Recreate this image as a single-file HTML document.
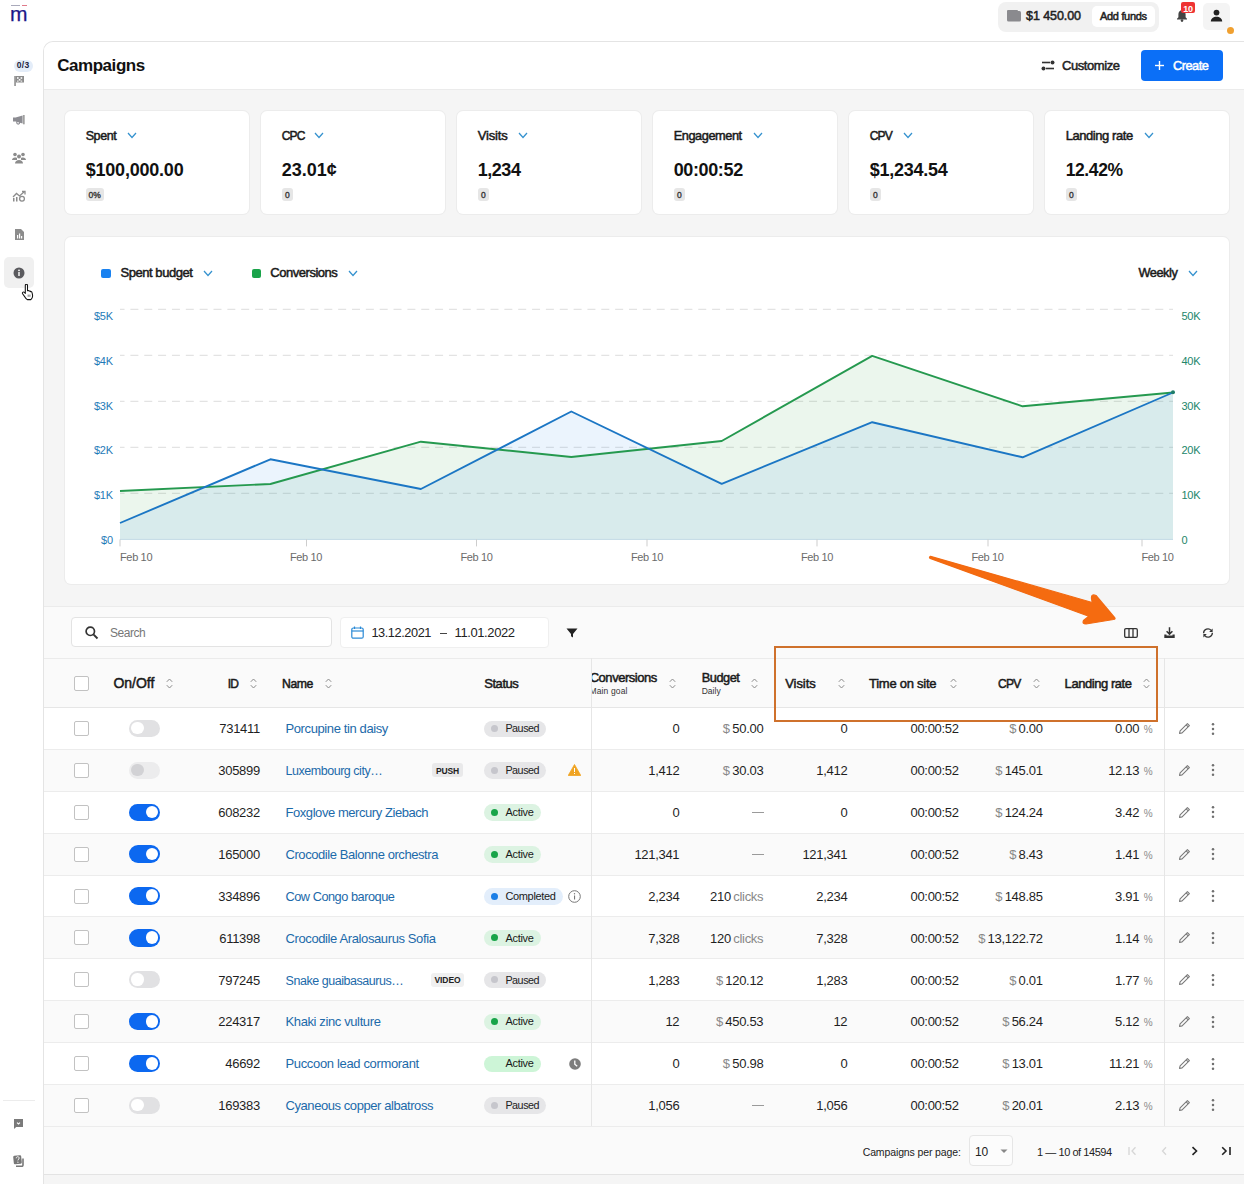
<!DOCTYPE html><html><head><meta charset="utf-8"><style>
html,body{margin:0;padding:0;overflow:hidden;}
body{width:1244px;height:1184px;position:relative;overflow:hidden;background:#fff;font-family:"Liberation Sans",sans-serif;}
.t{position:absolute;white-space:nowrap;line-height:1;}
</style></head><body>
<div style="position:absolute;left:43px;top:41px;width:1201px;height:1143px;background:#f5f5f5;border-left:1px solid #e4e4e4;border-top:1px solid #e4e4e4;border-top-left-radius:10px;box-sizing:border-box;"></div>
<div style="position:absolute;left:44px;top:42px;width:1200px;height:47px;background:#fff;border-top-left-radius:9px;border-bottom:1px solid #ebebeb;"></div>
<div class="t" style="top:57.00px;font-size:17px;color:#111;font-weight:700;letter-spacing:-0.45px;left:57.20px;">Campaigns</div>
<svg style="position:absolute;left:1041px;top:60px;" width="14" height="11" viewBox="0 0 14 11"><g stroke="#333" stroke-width="1.6" fill="#333"><line x1="1" y1="2.5" x2="9" y2="2.5"/><circle cx="11.5" cy="2.5" r="2" stroke="none"/><line x1="5" y1="8.5" x2="13" y2="8.5"/><circle cx="2.5" cy="8.5" r="2" stroke="none"/></g></svg>
<div class="t" style="top:59.00px;font-size:13px;color:#222;-webkit-text-stroke:0.5px #222;letter-spacing:-0.425px;left:1062.00px;">Customize</div>
<div style="position:absolute;left:1141px;top:50px;width:82px;height:31px;background:#0b6ff7;border-radius:4px;"></div>
<svg style="position:absolute;left:1155px;top:60px;" width="9" height="11" viewBox="0 0 9 11"><g stroke="#fff" stroke-width="1.4"><line x1="4.5" y1="1" x2="4.5" y2="10"/><line x1="0" y1="5.5" x2="9" y2="5.5"/></g></svg>
<div class="t" style="top:60.00px;font-size:12.75px;color:#fff;-webkit-text-stroke:0.5px #fff;letter-spacing:-0.48px;left:1173.00px;">Create</div>
<div class="t" style="top:3.00px;font-size:21px;color:#1c168a;left:10.00px;-webkit-text-stroke:0.25px #1b1f8a;">m</div>
<div style="position:absolute;left:11px;top:5px;width:9px;height:1px;background:#aab;"></div>
<div style="position:absolute;left:22px;top:5px;width:5px;height:1px;background:#e07a8a;"></div>
<div style="position:absolute;left:998px;top:2px;width:161px;height:30px;background:#f1f1f1;border-radius:8px;"></div>
<svg style="position:absolute;left:1007px;top:10px;" width="14" height="12" viewBox="0 0 14 12"><rect x="0" y="1" width="14" height="10.5" rx="1.5" fill="#8a8a8e"/><rect x="0" y="0" width="11" height="3" rx="1" fill="#8a8a8e"/></svg>
<div class="t" style="top:10.00px;font-size:12.5px;color:#222;-webkit-text-stroke:0.5px #222;letter-spacing:-0.075px;left:1026.00px;">$1 450.00</div>
<div style="position:absolute;left:1092px;top:6px;width:63px;height:21px;background:#fff;border-radius:5px;"></div>
<div class="t" style="top:11.00px;font-size:11px;color:#222;-webkit-text-stroke:0.5px #222;letter-spacing:-0.312px;left:1100.00px;">Add funds</div>
<svg style="position:absolute;left:1176px;top:9px;" width="12" height="13" viewBox="0 0 12 13"><path d="M6 1.2c-2.3 0-3.6 1.8-3.6 4v3L1 9.8v.7h10v-.7L9.6 8.2v-3c0-2.2-1.3-4-3.6-4z" fill="#444"/><circle cx="6" cy="11.6" r="1.3" fill="#444"/></svg>
<div style="position:absolute;left:1181px;top:2px;width:14px;height:11px;background:#e33;border-radius:2px;"></div>
<div class="t" style="top:5.00px;font-size:9px;color:#fff;font-weight:700;letter-spacing:-0.2px;left:888px;width:600px;text-align:center;">10</div>
<div style="position:absolute;left:1203px;top:3px;width:27px;height:27px;background:#f4f4f4;border-radius:5px;"></div>
<svg style="position:absolute;left:1210px;top:9px;" width="13" height="13" viewBox="0 0 13 13"><circle cx="6.5" cy="3.6" r="2.9" fill="#222"/><path d="M0.8 12.5c0-3 2.6-4.8 5.7-4.8s5.7 1.8 5.7 4.8z" fill="#222"/></svg>
<div style="position:absolute;left:1226.5px;top:26.5px;width:7px;height:7px;background:#f0a030;border-radius:50%;"></div>
<div style="position:absolute;left:14px;top:59.5px;width:18.5px;height:12px;background:#e4edf9;border-radius:6px;"></div>
<div class="t" style="top:61.00px;font-size:8.5px;color:#1c2440;font-weight:700;letter-spacing:0.4px;left:-276.75px;width:600px;text-align:center;">0/3</div>
<svg style="position:absolute;left:14px;top:75px;" width="11" height="11" viewBox="0 0 11 11"><rect x="0.3" y="1" width="1.5" height="10" fill="#888"/><rect x="1.8" y="1" width="8.2" height="6.5" fill="#8c8c8c"/><g fill="#fff"><rect x="3" y="2.2" width="1.6" height="1.6"/><rect x="6.6" y="2.2" width="1.6" height="1.6"/><rect x="4.8" y="4" width="1.6" height="1.6"/><rect x="3" y="5.6" width="1.6" height="1" /><rect x="6.6" y="5.6" width="1.6" height="1"/></g></svg>
<svg style="position:absolute;left:12px;top:114px;" width="13" height="11" viewBox="0 0 13 11"><path d="M1 3.6h2.6L10.6 1.6v7.8L3.6 7.4H1z" fill="#8c8c92"/><rect x="11" y="1" width="1.7" height="9.3" fill="#a0a0a0"/><circle cx="6.2" cy="8.6" r="1.5" fill="none" stroke="#8c8c92" stroke-width="1.1"/></svg>
<svg style="position:absolute;left:12px;top:152px;" width="14" height="12" viewBox="0 0 14 12"><g fill="#8c8c8c"><circle cx="3" cy="2.5" r="1.8"/><circle cx="11" cy="2.5" r="1.8"/><circle cx="7" cy="4.5" r="2"/><path d="M0 8c0-1.5 1.3-2.5 3-2.5s2 .5 2 .5v2z"/><path d="M14 8c0-1.5-1.3-2.5-3-2.5s-2 .5-2 .5v2z"/><path d="M3 11.5c0-2 1.8-3.5 4-3.5s4 1.5 4 3.5z"/></g></svg>
<svg style="position:absolute;left:12px;top:190px;" width="14" height="12" viewBox="0 0 14 12"><g fill="none" stroke="#8c8c8c" stroke-width="1.3"><path d="M1 7l3.5-3.5 3 2.5 5-4.5"/><path d="M10 1.5h3v3"/><circle cx="10" cy="8.8" r="2.4"/></g><rect x="1" y="8" width="1.5" height="3.5" fill="#8c8c8c"/><rect x="4" y="7" width="1.5" height="4.5" fill="#8c8c8c"/></svg>
<svg style="position:absolute;left:15px;top:229px;" width="9" height="11" viewBox="0 0 9 11"><path d="M0 0h6l3 3v8H0z" fill="#8c8c8c"/><rect x="2" y="6" width="1.2" height="3.5" fill="#fff"/><rect x="4" y="4.5" width="1.2" height="5" fill="#fff"/><rect x="6" y="7" width="1.2" height="2.5" fill="#fff"/></svg>
<div style="position:absolute;left:4px;top:257px;width:30px;height:31px;background:#f0f0f0;border-radius:5px;"></div>
<svg style="position:absolute;left:13px;top:267px;" width="12" height="12" viewBox="0 0 12 12"><circle cx="6" cy="6" r="5.5" fill="#5a5a5e"/><rect x="5.3" y="5" width="1.4" height="4" fill="#fff"/><circle cx="6" cy="3.3" r="0.9" fill="#fff"/></svg>
<svg style="position:absolute;left:20.5px;top:284px;" width="15" height="17" viewBox="0 0 15 17"><path d="M4.3 1.4c0-.7.5-1.1 1.1-1.1s1.1.4 1.1 1.1v5.3l.2-.1c.6-.2 1.2 0 1.4.6.6-.3 1.3-.1 1.5.5.6-.2 1.3.1 1.4.7l.5 2.4c.3 1.7-.2 3.6-1.6 4.8H6.3c-.8-.5-1.6-1.3-2.1-2.2L1.6 9.7c-.4-.6-.2-1.3.4-1.6.6-.3 1.2-.1 1.6.4l.7.9z" fill="#fff" stroke="#111" stroke-width="1.05" stroke-linejoin="round"/><path d="M7.2 10.6v2.2M8.9 10.6v2.2" stroke="#555" stroke-width=".8"/></svg>
<div style="position:absolute;left:3px;top:1100px;width:32px;height:1px;background:#ececec;"></div>
<svg style="position:absolute;left:14px;top:1119px;" width="9" height="10" viewBox="0 0 9 10"><path d="M0 0h9v8H2.2L0 10z" fill="#7a7a7a"/><path d="M3 3.6l1.5 1.3 1.5-1.3" stroke="#fff" stroke-width="1.2" fill="none"/></svg>
<svg style="position:absolute;left:13px;top:1155px;" width="11" height="12" viewBox="0 0 11 12"><rect x="0.5" y="0.5" width="8" height="8.5" rx="1.2" fill="#777" transform="rotate(-6 4.5 4.7)"/><path d="M10 3.5v6.5c0 .8-.5 1.3-1.3 1.3H3" stroke="#777" stroke-width="1.6" fill="none"/><path d="M3.2 3.3c0-1 .7-1.6 1.5-1.6s1.5.6 1.5 1.4c0 1-1.3 1.1-1.3 2.3" stroke="#fff" stroke-width="1" fill="none"/><circle cx="4.9" cy="7.2" r="0.6" fill="#fff"/></svg>
<div style="position:absolute;left:65px;top:111px;width:184px;height:103px;background:#fff;border-radius:6px;box-shadow:0 0 0 1px #ececec;"></div>
<div class="t" style="top:130.00px;font-size:12.5px;color:#1a1a1a;-webkit-text-stroke:0.5px #1a1a1a;letter-spacing:-0.425px;left:85.70px;">Spent</div>
<svg style="position:absolute;left:127.2px;top:131.5px;" width="10" height="7" viewBox="0 0 10 7"><path d="M1 1l4.0 4.5l4.0 -4.5" fill="none" stroke="#3592cf" stroke-width="1.25"/></svg>
<div class="t" style="top:161.00px;font-size:18px;color:#111;font-weight:700;letter-spacing:-0.21px;left:85.70px;">$100,000.00</div>
<div style="position:absolute;left:85.5px;top:188px;width:18.5px;height:13px;background:#e6e6e6;border-radius:3px;"></div>
<div class="t" style="top:191.00px;font-size:8.5px;color:#333;-webkit-text-stroke:0.35px #333;left:-205.25px;width:600px;text-align:center;">0%</div>
<div style="position:absolute;left:261px;top:111px;width:184px;height:103px;background:#fff;border-radius:6px;box-shadow:0 0 0 1px #ececec;"></div>
<div class="t" style="top:130.00px;font-size:12px;color:#1a1a1a;-webkit-text-stroke:0.5px #1a1a1a;letter-spacing:-0.8px;left:281.70px;">CPC</div>
<svg style="position:absolute;left:314.2px;top:131.5px;" width="10" height="7" viewBox="0 0 10 7"><path d="M1 1l4.0 4.5l4.0 -4.5" fill="none" stroke="#3592cf" stroke-width="1.25"/></svg>
<div class="t" style="top:161.00px;font-size:18px;color:#111;font-weight:700;letter-spacing:-0.02px;left:281.70px;">23.01¢</div>
<div style="position:absolute;left:281.5px;top:188px;width:11.5px;height:13px;background:#e6e6e6;border-radius:3px;"></div>
<div class="t" style="top:191.00px;font-size:8.5px;color:#333;-webkit-text-stroke:0.35px #333;left:-12.75px;width:600px;text-align:center;">0</div>
<div style="position:absolute;left:457px;top:111px;width:184px;height:103px;background:#fff;border-radius:6px;box-shadow:0 0 0 1px #ececec;"></div>
<div class="t" style="top:129.00px;font-size:13px;color:#1a1a1a;-webkit-text-stroke:0.5px #1a1a1a;letter-spacing:-0.14px;left:477.70px;">Visits</div>
<svg style="position:absolute;left:518.3px;top:131.5px;" width="10" height="7" viewBox="0 0 10 7"><path d="M1 1l4.0 4.5l4.0 -4.5" fill="none" stroke="#3592cf" stroke-width="1.25"/></svg>
<div class="t" style="top:161.00px;font-size:18px;color:#111;font-weight:700;letter-spacing:-0.45px;left:477.70px;">1,234</div>
<div style="position:absolute;left:477.5px;top:188px;width:11.5px;height:13px;background:#e6e6e6;border-radius:3px;"></div>
<div class="t" style="top:191.00px;font-size:8.5px;color:#333;-webkit-text-stroke:0.35px #333;left:183.25px;width:600px;text-align:center;">0</div>
<div style="position:absolute;left:653px;top:111px;width:184px;height:103px;background:#fff;border-radius:6px;box-shadow:0 0 0 1px #ececec;"></div>
<div class="t" style="top:130.00px;font-size:12.75px;color:#1a1a1a;-webkit-text-stroke:0.5px #1a1a1a;letter-spacing:-0.433px;left:673.70px;">Engagement</div>
<svg style="position:absolute;left:752.9000000000001px;top:131.5px;" width="10" height="7" viewBox="0 0 10 7"><path d="M1 1l4.0 4.5l4.0 -4.5" fill="none" stroke="#3592cf" stroke-width="1.25"/></svg>
<div class="t" style="top:161.00px;font-size:18px;color:#111;font-weight:700;letter-spacing:-0.371px;left:673.70px;">00:00:52</div>
<div style="position:absolute;left:673.5px;top:188px;width:11.5px;height:13px;background:#e6e6e6;border-radius:3px;"></div>
<div class="t" style="top:191.00px;font-size:8.5px;color:#333;-webkit-text-stroke:0.35px #333;left:379.25px;width:600px;text-align:center;">0</div>
<div style="position:absolute;left:849px;top:111px;width:184px;height:103px;background:#fff;border-radius:6px;box-shadow:0 0 0 1px #ececec;"></div>
<div class="t" style="top:130.00px;font-size:12px;color:#1a1a1a;-webkit-text-stroke:0.5px #1a1a1a;letter-spacing:-0.8px;left:869.70px;">CPV</div>
<svg style="position:absolute;left:903.2px;top:131.5px;" width="10" height="7" viewBox="0 0 10 7"><path d="M1 1l4.0 4.5l4.0 -4.5" fill="none" stroke="#3592cf" stroke-width="1.25"/></svg>
<div class="t" style="top:161.00px;font-size:18px;color:#111;font-weight:700;letter-spacing:-0.262px;left:869.70px;">$1,234.54</div>
<div style="position:absolute;left:869.5px;top:188px;width:11.5px;height:13px;background:#e6e6e6;border-radius:3px;"></div>
<div class="t" style="top:191.00px;font-size:8.5px;color:#333;-webkit-text-stroke:0.35px #333;left:575.25px;width:600px;text-align:center;">0</div>
<div style="position:absolute;left:1045px;top:111px;width:184px;height:103px;background:#fff;border-radius:6px;box-shadow:0 0 0 1px #ececec;"></div>
<div class="t" style="top:129.00px;font-size:13px;color:#1a1a1a;-webkit-text-stroke:0.5px #1a1a1a;letter-spacing:-0.436px;left:1065.70px;">Landing rate</div>
<svg style="position:absolute;left:1143.7px;top:131.5px;" width="10" height="7" viewBox="0 0 10 7"><path d="M1 1l4.0 4.5l4.0 -4.5" fill="none" stroke="#3592cf" stroke-width="1.25"/></svg>
<div class="t" style="top:162.00px;font-size:17.5px;color:#111;font-weight:700;letter-spacing:-0.4px;left:1065.70px;">12.42%</div>
<div style="position:absolute;left:1065.5px;top:188px;width:11.5px;height:13px;background:#e6e6e6;border-radius:3px;"></div>
<div class="t" style="top:191.00px;font-size:8.5px;color:#333;-webkit-text-stroke:0.35px #333;left:771.25px;width:600px;text-align:center;">0</div>
<div style="position:absolute;left:65px;top:237px;width:1164px;height:347px;background:#fff;border-radius:6px;box-shadow:0 0 0 1px #ececec;"></div>
<div style="position:absolute;left:101px;top:268.5px;width:9.5px;height:9.5px;background:#1a82f0;border-radius:2px;"></div>
<div class="t" style="top:266.00px;font-size:13px;color:#1a1a1a;-webkit-text-stroke:0.5px #1a1a1a;letter-spacing:-0.455px;left:120.50px;">Spent budget</div>
<svg style="position:absolute;left:203px;top:270px;" width="10" height="7" viewBox="0 0 10 7"><path d="M1 1l4.0 4.5l4.0 -4.5" fill="none" stroke="#3592cf" stroke-width="1.25"/></svg>
<div style="position:absolute;left:251.5px;top:268.5px;width:9.5px;height:9.5px;background:#1aa34a;border-radius:2px;"></div>
<div class="t" style="top:266.00px;font-size:13px;color:#1a1a1a;-webkit-text-stroke:0.5px #1a1a1a;letter-spacing:-0.47px;left:270.30px;">Conversions</div>
<svg style="position:absolute;left:348px;top:270px;" width="10" height="7" viewBox="0 0 10 7"><path d="M1 1l4.0 4.5l4.0 -4.5" fill="none" stroke="#3592cf" stroke-width="1.25"/></svg>
<div class="t" style="top:267.00px;font-size:12.75px;color:#1a1a1a;-webkit-text-stroke:0.5px #1a1a1a;letter-spacing:-0.46px;left:1138.50px;">Weekly</div>
<svg style="position:absolute;left:1187.5px;top:270px;" width="10" height="7" viewBox="0 0 10 7"><path d="M1 1l4.0 4.5l4.0 -4.5" fill="none" stroke="#3592cf" stroke-width="1.25"/></svg>
<svg style="position:absolute;left:0;top:0" width="1244" height="600" viewBox="0 0 1244 600"><line x1="120" y1="309.3" x2="1173" y2="309.3" stroke="#dcdcdc" stroke-width="1" stroke-dasharray="8 5.85" stroke-dashoffset="3.45"/><line x1="120" y1="355.3" x2="1173" y2="355.3" stroke="#dcdcdc" stroke-width="1" stroke-dasharray="8 5.85" stroke-dashoffset="3.45"/><line x1="120" y1="401.3" x2="1173" y2="401.3" stroke="#dcdcdc" stroke-width="1" stroke-dasharray="8 5.85" stroke-dashoffset="3.45"/><line x1="120" y1="447.3" x2="1173" y2="447.3" stroke="#dcdcdc" stroke-width="1" stroke-dasharray="8 5.85" stroke-dashoffset="3.45"/><line x1="120" y1="493.3" x2="1173" y2="493.3" stroke="#dcdcdc" stroke-width="1" stroke-dasharray="8 5.85" stroke-dashoffset="3.45"/><polygon points="120,539.4 120.0,491.0 270.4,484.0 420.9,441.7 571.3,457.0 721.7,441.0 872.2,355.9 1022.6,406.3 1173.0,392.5 1173,539.4" fill="rgba(60,170,80,0.10)"/><polygon points="120,539.4 120.0,523.0 270.4,459.3 420.9,489.0 571.3,411.5 721.7,483.8 872.2,422.2 1022.6,457.3 1173.0,392.5 1173,539.4" fill="rgba(30,136,229,0.09)"/><polyline points="120.0,491.0 270.4,484.0 420.9,441.7 571.3,457.0 721.7,441.0 872.2,355.9 1022.6,406.3 1173.0,392.5" fill="none" stroke="#25994f" stroke-width="1.9" stroke-linejoin="round"/><polyline points="120.0,523.0 270.4,459.3 420.9,489.0 571.3,411.5 721.7,483.8 872.2,422.2 1022.6,457.3 1173.0,392.5" fill="none" stroke="#1b76c4" stroke-width="1.9" stroke-linejoin="round"/><circle cx="1173" cy="392.3" r="2" fill="#1f7d68"/><line x1="120" y1="539.4" x2="1173" y2="539.4" stroke="#c3dae6" stroke-width="1"/><line x1="120" y1="539.4" x2="120" y2="546.4" stroke="#cdcdcd" stroke-width="1"/><line x1="306.5" y1="539.4" x2="306.5" y2="546.4" stroke="#cdcdcd" stroke-width="1"/><line x1="476.5" y1="539.4" x2="476.5" y2="546.4" stroke="#cdcdcd" stroke-width="1"/><line x1="647" y1="539.4" x2="647" y2="546.4" stroke="#cdcdcd" stroke-width="1"/><line x1="817" y1="539.4" x2="817" y2="546.4" stroke="#cdcdcd" stroke-width="1"/><line x1="988" y1="539.4" x2="988" y2="546.4" stroke="#cdcdcd" stroke-width="1"/><line x1="1142" y1="539.4" x2="1142" y2="546.4" stroke="#cdcdcd" stroke-width="1"/></svg>
<div class="t" style="top:311.00px;font-size:11px;color:#1f7ab8;letter-spacing:-0.3px;left:94.00px;">$5K</div>
<div class="t" style="top:311.00px;font-size:11px;color:#23866a;letter-spacing:-0.3px;left:1181.50px;">50K</div>
<div class="t" style="top:356.00px;font-size:11px;color:#1f7ab8;letter-spacing:-0.3px;left:94.00px;">$4K</div>
<div class="t" style="top:356.00px;font-size:11px;color:#23866a;letter-spacing:-0.3px;left:1181.50px;">40K</div>
<div class="t" style="top:401.00px;font-size:11px;color:#1f7ab8;letter-spacing:-0.3px;left:94.00px;">$3K</div>
<div class="t" style="top:401.00px;font-size:11px;color:#23866a;letter-spacing:-0.3px;left:1181.50px;">30K</div>
<div class="t" style="top:445.00px;font-size:11px;color:#1f7ab8;letter-spacing:-0.3px;left:94.00px;">$2K</div>
<div class="t" style="top:445.00px;font-size:11px;color:#23866a;letter-spacing:-0.3px;left:1181.50px;">20K</div>
<div class="t" style="top:490.00px;font-size:11px;color:#1f7ab8;letter-spacing:-0.3px;left:94.00px;">$1K</div>
<div class="t" style="top:490.00px;font-size:11px;color:#23866a;letter-spacing:-0.3px;left:1181.50px;">10K</div>
<div class="t" style="top:535.00px;font-size:11px;color:#1f7ab8;letter-spacing:-0.3px;left:101.10px;">$0</div>
<div class="t" style="top:535.00px;font-size:11px;color:#23866a;letter-spacing:-0.3px;left:1181.50px;">0</div>
<div class="t" style="top:552.00px;font-size:11px;color:#6b6b6b;letter-spacing:-0.35px;left:120.00px;">Feb 10</div>
<div class="t" style="top:552.00px;font-size:11px;color:#6b6b6b;letter-spacing:-0.35px;left:6px;width:600px;text-align:center;">Feb 10</div>
<div class="t" style="top:552.00px;font-size:11px;color:#6b6b6b;letter-spacing:-0.35px;left:176.5px;width:600px;text-align:center;">Feb 10</div>
<div class="t" style="top:552.00px;font-size:11px;color:#6b6b6b;letter-spacing:-0.35px;left:347px;width:600px;text-align:center;">Feb 10</div>
<div class="t" style="top:552.00px;font-size:11px;color:#6b6b6b;letter-spacing:-0.35px;left:517px;width:600px;text-align:center;">Feb 10</div>
<div class="t" style="top:552.00px;font-size:11px;color:#6b6b6b;letter-spacing:-0.35px;left:687.5px;width:600px;text-align:center;">Feb 10</div>
<div class="t" style="top:552.00px;font-size:11px;color:#6b6b6b;letter-spacing:-0.35px;left:857.5px;width:600px;text-align:center;">Feb 10</div>
<div style="position:absolute;left:44px;top:606px;width:1200px;height:52px;background:#fafafa;border-top:1px solid #ebebeb;box-sizing:border-box;"></div>
<div style="position:absolute;left:71px;top:617px;width:261px;height:30px;background:#fff;border:1px solid #e3e3e3;border-radius:4px;box-sizing:border-box;"></div>
<svg style="position:absolute;left:85px;top:626px;" width="14" height="14" viewBox="0 0 14 14"><circle cx="5.3" cy="5.3" r="4.2" fill="none" stroke="#333" stroke-width="1.7"/><line x1="8.4" y1="8.4" x2="12.5" y2="12.5" stroke="#333" stroke-width="1.9"/></svg>
<div class="t" style="top:627.00px;font-size:12px;color:#777;letter-spacing:-0.46px;left:110.00px;">Search</div>
<div style="position:absolute;left:340px;top:617px;width:209px;height:31px;background:#fff;border:1px solid #efefef;border-radius:4px;box-sizing:border-box;"></div>
<svg style="position:absolute;left:351px;top:626px;" width="13" height="13" viewBox="0 0 13 13"><rect x="0.8" y="2" width="11.4" height="10.2" rx="1.5" fill="none" stroke="#2b8ad6" stroke-width="1.2"/><line x1="0.8" y1="5" x2="12.2" y2="5" stroke="#2b8ad6" stroke-width="1.2"/><line x1="3.5" y1="0.5" x2="3.5" y2="3" stroke="#2b8ad6" stroke-width="1.2"/><line x1="9.5" y1="0.5" x2="9.5" y2="3" stroke="#2b8ad6" stroke-width="1.2"/></svg>
<div class="t" style="top:627.00px;font-size:12.75px;color:#222;letter-spacing:-0.422px;left:371.40px;">13.12.2021</div>
<div style="position:absolute;left:440px;top:632.5px;width:7px;height:1px;background:#444;"></div>
<div class="t" style="top:626.00px;font-size:13px;color:#222;letter-spacing:-0.411px;left:454.60px;">11.01.2022</div>
<svg style="position:absolute;left:566px;top:628px;" width="12" height="10" viewBox="0 0 12 10"><path d="M0.5 0.5h11L7 6v3.5L5 8.2V6z" fill="#222"/></svg>
<svg style="position:absolute;left:1124px;top:627.5px;" width="14" height="10" viewBox="0 0 14 10"><rect x="0.7" y="0.7" width="12.6" height="8.6" rx="1.2" fill="none" stroke="#333" stroke-width="1.3"/><line x1="5" y1="1" x2="5" y2="9" stroke="#333" stroke-width="1.3"/><line x1="9" y1="1" x2="9" y2="9" stroke="#333" stroke-width="1.3"/></svg>
<svg style="position:absolute;left:1163.5px;top:627px;" width="11" height="11.5" viewBox="0 0 11 11.5"><path d="M5.5 0.3v6.6M2.6 4.2l2.9 2.9 2.9-2.9" fill="none" stroke="#333" stroke-width="1.5"/><path d="M0.3 7.6h2.2v1h6v-1h2.2v3.4H0.3z" fill="#333"/></svg>
<svg style="position:absolute;left:1202px;top:627.5px;" width="12" height="10" viewBox="0 0 12 10"><path d="M1.6 5.2A4.3 4.3 0 0 1 9.2 2.4M10.4 4.8A4.3 4.3 0 0 1 2.8 7.6" fill="none" stroke="#333" stroke-width="1.3"/><path d="M10.6 0.6v3.4H7.2z" fill="#333"/><path d="M1.4 9.4V6H4.8z" fill="#333"/></svg>
<div style="position:absolute;left:44px;top:658px;width:1200px;height:50px;background:#fafafa;border-top:1px solid #ebebeb;border-bottom:1px solid #e6e6e6;box-sizing:border-box;"></div>
<div style="position:absolute;left:74px;top:676px;width:15px;height:15px;border:1.5px solid #c2c2c2;border-radius:2px;box-sizing:border-box;background:#fff;"></div>
<div class="t" style="top:676.00px;font-size:14px;color:#1a1a1a;-webkit-text-stroke:0.5px #1a1a1a;letter-spacing:-0.02px;left:113.40px;">On/Off</div>
<svg style="position:absolute;left:166px;top:678px;" width="7" height="11" viewBox="0 0 7 11"><path d="M0.8 3.8L3.5 1l2.7 2.8M0.8 7.2L3.5 10l2.7-2.8" fill="none" stroke="#8a8a8a" stroke-width="1"/></svg>
<div class="t" style="top:678.00px;font-size:12px;color:#1a1a1a;-webkit-text-stroke:0.5px #1a1a1a;letter-spacing:-0.8px;left:227.80px;">ID</div>
<svg style="position:absolute;left:250px;top:678px;" width="7" height="11" viewBox="0 0 7 11"><path d="M0.8 3.8L3.5 1l2.7 2.8M0.8 7.2L3.5 10l2.7-2.8" fill="none" stroke="#8a8a8a" stroke-width="1"/></svg>
<div class="t" style="top:678.00px;font-size:12.25px;color:#1a1a1a;-webkit-text-stroke:0.5px #1a1a1a;letter-spacing:-0.433px;left:282.00px;">Name</div>
<svg style="position:absolute;left:324.5px;top:678px;" width="7" height="11" viewBox="0 0 7 11"><path d="M0.8 3.8L3.5 1l2.7 2.8M0.8 7.2L3.5 10l2.7-2.8" fill="none" stroke="#8a8a8a" stroke-width="1"/></svg>
<div class="t" style="top:677.00px;font-size:13px;color:#1a1a1a;-webkit-text-stroke:0.5px #1a1a1a;letter-spacing:-0.44px;left:484.20px;">Status</div>
<div style="position:absolute;left:0;top:0;width:1244px;height:1184px;clip-path:inset(0 0 0 592px);">
<div class="t" style="top:671.00px;font-size:13px;color:#1a1a1a;-webkit-text-stroke:0.5px #1a1a1a;letter-spacing:-0.47px;left:589.70px;">Conversions</div>
<div class="t" style="top:687.00px;font-size:8.5px;color:#333;letter-spacing:0.138px;left:589.50px;">Main goal</div>
</div>
<svg style="position:absolute;left:668.5px;top:678px;" width="7" height="11" viewBox="0 0 7 11"><path d="M0.8 3.8L3.5 1l2.7 2.8M0.8 7.2L3.5 10l2.7-2.8" fill="none" stroke="#8a8a8a" stroke-width="1"/></svg>
<div class="t" style="top:672.00px;font-size:12.75px;color:#1a1a1a;-webkit-text-stroke:0.5px #1a1a1a;letter-spacing:-0.44px;left:701.70px;">Budget</div>
<div class="t" style="top:687.00px;font-size:8.5px;color:#333;letter-spacing:0.025px;left:701.70px;">Daily</div>
<svg style="position:absolute;left:750.5px;top:678px;" width="7" height="11" viewBox="0 0 7 11"><path d="M0.8 3.8L3.5 1l2.7 2.8M0.8 7.2L3.5 10l2.7-2.8" fill="none" stroke="#8a8a8a" stroke-width="1"/></svg>
<div class="t" style="top:677.00px;font-size:13px;color:#1a1a1a;-webkit-text-stroke:0.5px #1a1a1a;letter-spacing:-0.06px;left:785.20px;">Visits</div>
<svg style="position:absolute;left:837.5px;top:678px;" width="7" height="11" viewBox="0 0 7 11"><path d="M0.8 3.8L3.5 1l2.7 2.8M0.8 7.2L3.5 10l2.7-2.8" fill="none" stroke="#8a8a8a" stroke-width="1"/></svg>
<div class="t" style="top:677.00px;font-size:13px;color:#1a1a1a;-webkit-text-stroke:0.5px #1a1a1a;letter-spacing:-0.255px;left:869.00px;">Time on site</div>
<svg style="position:absolute;left:949.5px;top:678px;" width="7" height="11" viewBox="0 0 7 11"><path d="M0.8 3.8L3.5 1l2.7 2.8M0.8 7.2L3.5 10l2.7-2.8" fill="none" stroke="#8a8a8a" stroke-width="1"/></svg>
<div class="t" style="top:678.00px;font-size:12px;color:#1a1a1a;-webkit-text-stroke:0.5px #1a1a1a;letter-spacing:-0.65px;left:997.90px;">CPV</div>
<svg style="position:absolute;left:1032.5px;top:678px;" width="7" height="11" viewBox="0 0 7 11"><path d="M0.8 3.8L3.5 1l2.7 2.8M0.8 7.2L3.5 10l2.7-2.8" fill="none" stroke="#8a8a8a" stroke-width="1"/></svg>
<div class="t" style="top:677.00px;font-size:13px;color:#1a1a1a;-webkit-text-stroke:0.5px #1a1a1a;letter-spacing:-0.445px;left:1064.60px;">Landing rate</div>
<svg style="position:absolute;left:1143px;top:678px;" width="7" height="11" viewBox="0 0 7 11"><path d="M0.8 3.8L3.5 1l2.7 2.8M0.8 7.2L3.5 10l2.7-2.8" fill="none" stroke="#8a8a8a" stroke-width="1"/></svg>
<div style="position:absolute;left:44px;top:708.0px;width:1200px;height:41.88px;background:#fff;border-bottom:1px solid #ececec;box-sizing:border-box;"></div>
<div style="position:absolute;left:74px;top:721.0px;width:15px;height:15px;border:1.5px solid #c2c2c2;border-radius:2px;box-sizing:border-box;background:#fff;"></div>
<div style="position:absolute;left:129px;top:719.8px;width:31px;height:17.4px;background:#e1e1e3;border-radius:9px;"></div>
<div style="position:absolute;left:131.2px;top:721.9px;width:12.6px;height:12.6px;background:#fff;border-radius:50%;"></div>
<div class="t" style="top:722.00px;font-size:13px;color:#1f1f1f;letter-spacing:-0.3px;left:219.30px;">731411</div>
<div class="t" style="top:722.00px;font-size:13px;color:#1c6aaa;letter-spacing:-0.389px;left:285.50px;">Porcupine tin daisy</div>
<div style="position:absolute;left:484.4px;top:720.5px;width:62px;height:16.5px;background:#e6e6e8;border-radius:9px;"></div>
<div style="position:absolute;left:491px;top:725.0px;width:7px;height:7px;background:#c6c6cc;border-radius:50%;"></div>
<div class="t" style="top:723.00px;font-size:10.75px;color:#222;letter-spacing:-0.46px;left:505.40px;">Paused</div>
<div class="t" style="top:722.00px;font-size:13px;color:#1f1f1f;letter-spacing:-0.3px;left:672.40px;">0</div>
<div class="t" style="top:722.00px;font-size:13px;color:#1f1f1f;letter-spacing:-0.3px;left:732.30px;">50.00</div>
<div class="t" style="top:722.00px;font-size:13px;color:#888;letter-spacing:-0.3px;left:722.85px;">$</div>
<div class="t" style="top:722.00px;font-size:13px;color:#1f1f1f;letter-spacing:-0.3px;left:840.40px;">0</div>
<div class="t" style="top:722.00px;font-size:13px;color:#1f1f1f;letter-spacing:-0.3px;left:910.50px;">00:00:52</div>
<div class="t" style="top:722.00px;font-size:13px;color:#1f1f1f;letter-spacing:-0.3px;left:1018.60px;">0.00</div>
<div class="t" style="top:722.00px;font-size:13px;color:#888;letter-spacing:-0.3px;left:1009.19px;">$</div>
<div class="t" style="top:725.00px;font-size:10px;color:#8a8a8a;letter-spacing:0px;left:1143.80px;">%</div>
<div class="t" style="top:722.00px;font-size:13px;color:#1f1f1f;letter-spacing:-0.3px;left:1115.10px;">0.00</div>
<svg style="position:absolute;left:1178px;top:722.0px;" width="13" height="13" viewBox="0 0 13 13"><path d="M1.5 11.5l0.6-2.6 7.3-7.3 2 2-7.3 7.3z" fill="none" stroke="#7a7a7a" stroke-width="1.1" stroke-linejoin="round"/><line x1="8.2" y1="2.8" x2="10.2" y2="4.8" stroke="#7a7a7a" stroke-width="1.1"/></svg>
<svg style="position:absolute;left:1211px;top:721.5px;" width="4" height="14" viewBox="0 0 4 14"><circle cx="2" cy="2.3" r="1.25" fill="#707070"/><circle cx="2" cy="7" r="1.25" fill="#707070"/><circle cx="2" cy="11.7" r="1.25" fill="#707070"/></svg>
<div style="position:absolute;left:44px;top:749.88px;width:1200px;height:41.88px;background:#fafafa;border-bottom:1px solid #ececec;box-sizing:border-box;"></div>
<div style="position:absolute;left:74px;top:762.88px;width:15px;height:15px;border:1.5px solid #c2c2c2;border-radius:2px;box-sizing:border-box;background:#fff;"></div>
<div style="position:absolute;left:129px;top:761.68px;width:31px;height:17.4px;background:#ececed;border-radius:9px;"></div>
<div style="position:absolute;left:131.2px;top:763.78px;width:12.6px;height:12.6px;background:#d2d2d5;border-radius:50%;"></div>
<div class="t" style="top:764.00px;font-size:13px;color:#1f1f1f;letter-spacing:-0.3px;left:218.30px;">305899</div>
<div class="t" style="top:765.00px;font-size:12.5px;color:#1c6aaa;letter-spacing:-0.467px;left:285.50px;">Luxembourg city…</div>
<div style="position:absolute;left:432px;top:763.38px;width:31px;height:14px;background:#e9e9ea;border-radius:3px;"></div>
<div class="t" style="top:767.00px;font-size:8.5px;color:#222;font-weight:700;letter-spacing:-0.1px;left:147.5px;width:600px;text-align:center;">PUSH</div>
<div style="position:absolute;left:484.4px;top:762.38px;width:62px;height:16.5px;background:#e6e6e8;border-radius:9px;"></div>
<div style="position:absolute;left:491px;top:766.88px;width:7px;height:7px;background:#c6c6cc;border-radius:50%;"></div>
<div class="t" style="top:765.00px;font-size:10.75px;color:#222;letter-spacing:-0.46px;left:505.40px;">Paused</div>
<svg style="position:absolute;left:568px;top:764.38px;" width="13" height="12" viewBox="0 0 13 12"><path d="M6.5 0.5L12.8 11.5H0.2z" fill="#f0a423" stroke="#f0a423" stroke-linejoin="round" stroke-width="0.8"/><rect x="6" y="4" width="1" height="4" fill="#fff"/><rect x="6" y="9" width="1" height="1" fill="#fff"/></svg>
<div class="t" style="top:764.00px;font-size:13px;color:#1f1f1f;letter-spacing:-0.3px;left:648.30px;">1,412</div>
<div class="t" style="top:764.00px;font-size:13px;color:#1f1f1f;letter-spacing:-0.3px;left:732.30px;">30.03</div>
<div class="t" style="top:764.00px;font-size:13px;color:#888;letter-spacing:-0.3px;left:722.85px;">$</div>
<div class="t" style="top:764.00px;font-size:13px;color:#1f1f1f;letter-spacing:-0.3px;left:816.30px;">1,412</div>
<div class="t" style="top:764.00px;font-size:13px;color:#1f1f1f;letter-spacing:-0.3px;left:910.50px;">00:00:52</div>
<div class="t" style="top:764.00px;font-size:13px;color:#1f1f1f;letter-spacing:-0.3px;left:1004.70px;">145.01</div>
<div class="t" style="top:764.00px;font-size:13px;color:#888;letter-spacing:-0.3px;left:995.32px;">$</div>
<div class="t" style="top:767.00px;font-size:10px;color:#8a8a8a;letter-spacing:0px;left:1143.80px;">%</div>
<div class="t" style="top:764.00px;font-size:13px;color:#1f1f1f;letter-spacing:-0.3px;left:1108.20px;">12.13</div>
<svg style="position:absolute;left:1178px;top:763.88px;" width="13" height="13" viewBox="0 0 13 13"><path d="M1.5 11.5l0.6-2.6 7.3-7.3 2 2-7.3 7.3z" fill="none" stroke="#7a7a7a" stroke-width="1.1" stroke-linejoin="round"/><line x1="8.2" y1="2.8" x2="10.2" y2="4.8" stroke="#7a7a7a" stroke-width="1.1"/></svg>
<svg style="position:absolute;left:1211px;top:763.38px;" width="4" height="14" viewBox="0 0 4 14"><circle cx="2" cy="2.3" r="1.25" fill="#707070"/><circle cx="2" cy="7" r="1.25" fill="#707070"/><circle cx="2" cy="11.7" r="1.25" fill="#707070"/></svg>
<div style="position:absolute;left:44px;top:791.76px;width:1200px;height:41.88px;background:#fff;border-bottom:1px solid #ececec;box-sizing:border-box;"></div>
<div style="position:absolute;left:74px;top:804.76px;width:15px;height:15px;border:1.5px solid #c2c2c2;border-radius:2px;box-sizing:border-box;background:#fff;"></div>
<div style="position:absolute;left:129px;top:803.56px;width:31px;height:17.4px;background:#0c68f0;border-radius:9px;"></div>
<div style="position:absolute;left:145.6px;top:805.66px;width:12.6px;height:12.6px;background:#fff;border-radius:50%;"></div>
<div class="t" style="top:806.00px;font-size:13px;color:#1f1f1f;letter-spacing:-0.3px;left:218.30px;">608232</div>
<div class="t" style="top:806.00px;font-size:13px;color:#1c6aaa;letter-spacing:-0.439px;left:285.50px;">Foxglove mercury Ziebach</div>
<div style="position:absolute;left:484.4px;top:804.26px;width:57px;height:16.5px;background:#dcf3e2;border-radius:9px;"></div>
<div style="position:absolute;left:491px;top:808.76px;width:7px;height:7px;background:#18a449;border-radius:50%;"></div>
<div class="t" style="top:807.00px;font-size:11px;color:#1a1a1a;letter-spacing:-0.3px;left:505.40px;">Active</div>
<div class="t" style="top:806.00px;font-size:13px;color:#1f1f1f;letter-spacing:-0.3px;left:672.40px;">0</div>
<div style="position:absolute;left:752px;top:812.26px;width:12px;height:1px;background:#9a9a9a;"></div>
<div class="t" style="top:806.00px;font-size:13px;color:#1f1f1f;letter-spacing:-0.3px;left:840.40px;">0</div>
<div class="t" style="top:806.00px;font-size:13px;color:#1f1f1f;letter-spacing:-0.3px;left:910.50px;">00:00:52</div>
<div class="t" style="top:806.00px;font-size:13px;color:#1f1f1f;letter-spacing:-0.3px;left:1004.70px;">124.24</div>
<div class="t" style="top:806.00px;font-size:13px;color:#888;letter-spacing:-0.3px;left:995.32px;">$</div>
<div class="t" style="top:809.00px;font-size:10px;color:#8a8a8a;letter-spacing:0px;left:1143.80px;">%</div>
<div class="t" style="top:806.00px;font-size:13px;color:#1f1f1f;letter-spacing:-0.3px;left:1115.10px;">3.42</div>
<svg style="position:absolute;left:1178px;top:805.76px;" width="13" height="13" viewBox="0 0 13 13"><path d="M1.5 11.5l0.6-2.6 7.3-7.3 2 2-7.3 7.3z" fill="none" stroke="#7a7a7a" stroke-width="1.1" stroke-linejoin="round"/><line x1="8.2" y1="2.8" x2="10.2" y2="4.8" stroke="#7a7a7a" stroke-width="1.1"/></svg>
<svg style="position:absolute;left:1211px;top:805.26px;" width="4" height="14" viewBox="0 0 4 14"><circle cx="2" cy="2.3" r="1.25" fill="#707070"/><circle cx="2" cy="7" r="1.25" fill="#707070"/><circle cx="2" cy="11.7" r="1.25" fill="#707070"/></svg>
<div style="position:absolute;left:44px;top:833.64px;width:1200px;height:41.88px;background:#fafafa;border-bottom:1px solid #ececec;box-sizing:border-box;"></div>
<div style="position:absolute;left:74px;top:846.64px;width:15px;height:15px;border:1.5px solid #c2c2c2;border-radius:2px;box-sizing:border-box;background:#fff;"></div>
<div style="position:absolute;left:129px;top:845.4399999999999px;width:31px;height:17.4px;background:#0c68f0;border-radius:9px;"></div>
<div style="position:absolute;left:145.6px;top:847.54px;width:12.6px;height:12.6px;background:#fff;border-radius:50%;"></div>
<div class="t" style="top:848.00px;font-size:13px;color:#1f1f1f;letter-spacing:-0.3px;left:218.30px;">165000</div>
<div class="t" style="top:848.00px;font-size:13px;color:#1c6aaa;letter-spacing:-0.427px;left:285.50px;">Crocodile Balonne orchestra</div>
<div style="position:absolute;left:484.4px;top:846.14px;width:57px;height:16.5px;background:#dcf3e2;border-radius:9px;"></div>
<div style="position:absolute;left:491px;top:850.64px;width:7px;height:7px;background:#18a449;border-radius:50%;"></div>
<div class="t" style="top:849.00px;font-size:11px;color:#1a1a1a;letter-spacing:-0.3px;left:505.40px;">Active</div>
<div class="t" style="top:848.00px;font-size:13px;color:#1f1f1f;letter-spacing:-0.3px;left:634.40px;">121,341</div>
<div style="position:absolute;left:752px;top:854.14px;width:12px;height:1px;background:#9a9a9a;"></div>
<div class="t" style="top:848.00px;font-size:13px;color:#1f1f1f;letter-spacing:-0.3px;left:802.40px;">121,341</div>
<div class="t" style="top:848.00px;font-size:13px;color:#1f1f1f;letter-spacing:-0.3px;left:910.50px;">00:00:52</div>
<div class="t" style="top:848.00px;font-size:13px;color:#1f1f1f;letter-spacing:-0.3px;left:1018.60px;">8.43</div>
<div class="t" style="top:848.00px;font-size:13px;color:#888;letter-spacing:-0.3px;left:1009.19px;">$</div>
<div class="t" style="top:851.00px;font-size:10px;color:#8a8a8a;letter-spacing:0px;left:1143.80px;">%</div>
<div class="t" style="top:848.00px;font-size:13px;color:#1f1f1f;letter-spacing:-0.3px;left:1115.10px;">1.41</div>
<svg style="position:absolute;left:1178px;top:847.64px;" width="13" height="13" viewBox="0 0 13 13"><path d="M1.5 11.5l0.6-2.6 7.3-7.3 2 2-7.3 7.3z" fill="none" stroke="#7a7a7a" stroke-width="1.1" stroke-linejoin="round"/><line x1="8.2" y1="2.8" x2="10.2" y2="4.8" stroke="#7a7a7a" stroke-width="1.1"/></svg>
<svg style="position:absolute;left:1211px;top:847.14px;" width="4" height="14" viewBox="0 0 4 14"><circle cx="2" cy="2.3" r="1.25" fill="#707070"/><circle cx="2" cy="7" r="1.25" fill="#707070"/><circle cx="2" cy="11.7" r="1.25" fill="#707070"/></svg>
<div style="position:absolute;left:44px;top:875.52px;width:1200px;height:41.88px;background:#fff;border-bottom:1px solid #ececec;box-sizing:border-box;"></div>
<div style="position:absolute;left:74px;top:888.52px;width:15px;height:15px;border:1.5px solid #c2c2c2;border-radius:2px;box-sizing:border-box;background:#fff;"></div>
<div style="position:absolute;left:129px;top:887.3199999999999px;width:31px;height:17.4px;background:#0c68f0;border-radius:9px;"></div>
<div style="position:absolute;left:145.6px;top:889.42px;width:12.6px;height:12.6px;background:#fff;border-radius:50%;"></div>
<div class="t" style="top:890.00px;font-size:13px;color:#1f1f1f;letter-spacing:-0.3px;left:218.30px;">334896</div>
<div class="t" style="top:891.00px;font-size:12.75px;color:#1c6aaa;letter-spacing:-0.475px;left:285.50px;">Cow Congo baroque</div>
<div style="position:absolute;left:484.4px;top:888.02px;width:79px;height:16.5px;background:#e3eefb;border-radius:9px;"></div>
<div style="position:absolute;left:491px;top:892.52px;width:7px;height:7px;background:#1a7ee6;border-radius:50%;"></div>
<div class="t" style="top:891.00px;font-size:11px;color:#1a1a1a;letter-spacing:-0.338px;left:505.40px;">Completed</div>
<svg style="position:absolute;left:568px;top:889.52px;" width="13" height="13" viewBox="0 0 13 13"><circle cx="6.5" cy="6.5" r="5.8" fill="none" stroke="#777" stroke-width="1"/><rect x="6" y="5.5" width="1.1" height="4" fill="#777"/><circle cx="6.5" cy="3.8" r="0.7" fill="#777"/></svg>
<div class="t" style="top:890.00px;font-size:13px;color:#1f1f1f;letter-spacing:-0.3px;left:648.30px;">2,234</div>
<div class="t" style="top:890.00px;font-size:13px;color:#888;letter-spacing:-0.3px;left:733.30px;">clicks</div>
<div class="t" style="top:890.00px;font-size:13px;color:#1f1f1f;letter-spacing:-0.3px;left:710.02px;">210</div>
<div class="t" style="top:890.00px;font-size:13px;color:#1f1f1f;letter-spacing:-0.3px;left:816.30px;">2,234</div>
<div class="t" style="top:890.00px;font-size:13px;color:#1f1f1f;letter-spacing:-0.3px;left:910.50px;">00:00:52</div>
<div class="t" style="top:890.00px;font-size:13px;color:#1f1f1f;letter-spacing:-0.3px;left:1004.70px;">148.85</div>
<div class="t" style="top:890.00px;font-size:13px;color:#888;letter-spacing:-0.3px;left:995.32px;">$</div>
<div class="t" style="top:893.00px;font-size:10px;color:#8a8a8a;letter-spacing:0px;left:1143.80px;">%</div>
<div class="t" style="top:890.00px;font-size:13px;color:#1f1f1f;letter-spacing:-0.3px;left:1115.10px;">3.91</div>
<svg style="position:absolute;left:1178px;top:889.52px;" width="13" height="13" viewBox="0 0 13 13"><path d="M1.5 11.5l0.6-2.6 7.3-7.3 2 2-7.3 7.3z" fill="none" stroke="#7a7a7a" stroke-width="1.1" stroke-linejoin="round"/><line x1="8.2" y1="2.8" x2="10.2" y2="4.8" stroke="#7a7a7a" stroke-width="1.1"/></svg>
<svg style="position:absolute;left:1211px;top:889.02px;" width="4" height="14" viewBox="0 0 4 14"><circle cx="2" cy="2.3" r="1.25" fill="#707070"/><circle cx="2" cy="7" r="1.25" fill="#707070"/><circle cx="2" cy="11.7" r="1.25" fill="#707070"/></svg>
<div style="position:absolute;left:44px;top:917.4px;width:1200px;height:41.88px;background:#fafafa;border-bottom:1px solid #ececec;box-sizing:border-box;"></div>
<div style="position:absolute;left:74px;top:930.4px;width:15px;height:15px;border:1.5px solid #c2c2c2;border-radius:2px;box-sizing:border-box;background:#fff;"></div>
<div style="position:absolute;left:129px;top:929.1999999999999px;width:31px;height:17.4px;background:#0c68f0;border-radius:9px;"></div>
<div style="position:absolute;left:145.6px;top:931.3px;width:12.6px;height:12.6px;background:#fff;border-radius:50%;"></div>
<div class="t" style="top:932.00px;font-size:13px;color:#1f1f1f;letter-spacing:-0.3px;left:219.30px;">611398</div>
<div class="t" style="top:932.00px;font-size:13px;color:#1c6aaa;letter-spacing:-0.385px;left:285.50px;">Crocodile Aralosaurus Sofia</div>
<div style="position:absolute;left:484.4px;top:929.9px;width:57px;height:16.5px;background:#dcf3e2;border-radius:9px;"></div>
<div style="position:absolute;left:491px;top:934.4px;width:7px;height:7px;background:#18a449;border-radius:50%;"></div>
<div class="t" style="top:933.00px;font-size:11px;color:#1a1a1a;letter-spacing:-0.3px;left:505.40px;">Active</div>
<div class="t" style="top:932.00px;font-size:13px;color:#1f1f1f;letter-spacing:-0.3px;left:648.30px;">7,328</div>
<div class="t" style="top:932.00px;font-size:13px;color:#888;letter-spacing:-0.3px;left:733.30px;">clicks</div>
<div class="t" style="top:932.00px;font-size:13px;color:#1f1f1f;letter-spacing:-0.3px;left:710.02px;">120</div>
<div class="t" style="top:932.00px;font-size:13px;color:#1f1f1f;letter-spacing:-0.3px;left:816.30px;">7,328</div>
<div class="t" style="top:932.00px;font-size:13px;color:#1f1f1f;letter-spacing:-0.3px;left:910.50px;">00:00:52</div>
<div class="t" style="top:932.00px;font-size:13px;color:#1f1f1f;letter-spacing:-0.3px;left:987.60px;">13,122.72</div>
<div class="t" style="top:932.00px;font-size:13px;color:#888;letter-spacing:-0.3px;left:978.14px;">$</div>
<div class="t" style="top:935.00px;font-size:10px;color:#8a8a8a;letter-spacing:0px;left:1143.80px;">%</div>
<div class="t" style="top:932.00px;font-size:13px;color:#1f1f1f;letter-spacing:-0.3px;left:1115.10px;">1.14</div>
<svg style="position:absolute;left:1178px;top:931.4px;" width="13" height="13" viewBox="0 0 13 13"><path d="M1.5 11.5l0.6-2.6 7.3-7.3 2 2-7.3 7.3z" fill="none" stroke="#7a7a7a" stroke-width="1.1" stroke-linejoin="round"/><line x1="8.2" y1="2.8" x2="10.2" y2="4.8" stroke="#7a7a7a" stroke-width="1.1"/></svg>
<svg style="position:absolute;left:1211px;top:930.9px;" width="4" height="14" viewBox="0 0 4 14"><circle cx="2" cy="2.3" r="1.25" fill="#707070"/><circle cx="2" cy="7" r="1.25" fill="#707070"/><circle cx="2" cy="11.7" r="1.25" fill="#707070"/></svg>
<div style="position:absolute;left:44px;top:959.28px;width:1200px;height:41.88px;background:#fff;border-bottom:1px solid #ececec;box-sizing:border-box;"></div>
<div style="position:absolute;left:74px;top:972.28px;width:15px;height:15px;border:1.5px solid #c2c2c2;border-radius:2px;box-sizing:border-box;background:#fff;"></div>
<div style="position:absolute;left:129px;top:971.0799999999999px;width:31px;height:17.4px;background:#e1e1e3;border-radius:9px;"></div>
<div style="position:absolute;left:131.2px;top:973.18px;width:12.6px;height:12.6px;background:#fff;border-radius:50%;"></div>
<div class="t" style="top:974.00px;font-size:13px;color:#1f1f1f;letter-spacing:-0.3px;left:218.30px;">797245</div>
<div class="t" style="top:975.00px;font-size:12.5px;color:#1c6aaa;letter-spacing:-0.45px;left:285.50px;">Snake guaibasaurus…</div>
<div style="position:absolute;left:431px;top:972.78px;width:32.5px;height:14px;background:#f0f0f0;border-radius:3px;"></div>
<div class="t" style="top:976.00px;font-size:8.5px;color:#222;font-weight:700;letter-spacing:-0.1px;left:147.5px;width:600px;text-align:center;">VIDEO</div>
<div style="position:absolute;left:484.4px;top:971.78px;width:62px;height:16.5px;background:#e6e6e8;border-radius:9px;"></div>
<div style="position:absolute;left:491px;top:976.28px;width:7px;height:7px;background:#c6c6cc;border-radius:50%;"></div>
<div class="t" style="top:975.00px;font-size:10.75px;color:#222;letter-spacing:-0.46px;left:505.40px;">Paused</div>
<div class="t" style="top:974.00px;font-size:13px;color:#1f1f1f;letter-spacing:-0.3px;left:648.30px;">1,283</div>
<div class="t" style="top:974.00px;font-size:13px;color:#1f1f1f;letter-spacing:-0.3px;left:725.30px;">120.12</div>
<div class="t" style="top:974.00px;font-size:13px;color:#888;letter-spacing:-0.3px;left:715.92px;">$</div>
<div class="t" style="top:974.00px;font-size:13px;color:#1f1f1f;letter-spacing:-0.3px;left:816.30px;">1,283</div>
<div class="t" style="top:974.00px;font-size:13px;color:#1f1f1f;letter-spacing:-0.3px;left:910.50px;">00:00:52</div>
<div class="t" style="top:974.00px;font-size:13px;color:#1f1f1f;letter-spacing:-0.3px;left:1018.60px;">0.01</div>
<div class="t" style="top:974.00px;font-size:13px;color:#888;letter-spacing:-0.3px;left:1009.19px;">$</div>
<div class="t" style="top:977.00px;font-size:10px;color:#8a8a8a;letter-spacing:0px;left:1143.80px;">%</div>
<div class="t" style="top:974.00px;font-size:13px;color:#1f1f1f;letter-spacing:-0.3px;left:1115.10px;">1.77</div>
<svg style="position:absolute;left:1178px;top:973.28px;" width="13" height="13" viewBox="0 0 13 13"><path d="M1.5 11.5l0.6-2.6 7.3-7.3 2 2-7.3 7.3z" fill="none" stroke="#7a7a7a" stroke-width="1.1" stroke-linejoin="round"/><line x1="8.2" y1="2.8" x2="10.2" y2="4.8" stroke="#7a7a7a" stroke-width="1.1"/></svg>
<svg style="position:absolute;left:1211px;top:972.78px;" width="4" height="14" viewBox="0 0 4 14"><circle cx="2" cy="2.3" r="1.25" fill="#707070"/><circle cx="2" cy="7" r="1.25" fill="#707070"/><circle cx="2" cy="11.7" r="1.25" fill="#707070"/></svg>
<div style="position:absolute;left:44px;top:1001.16px;width:1200px;height:41.88px;background:#fafafa;border-bottom:1px solid #ececec;box-sizing:border-box;"></div>
<div style="position:absolute;left:74px;top:1014.1600000000001px;width:15px;height:15px;border:1.5px solid #c2c2c2;border-radius:2px;box-sizing:border-box;background:#fff;"></div>
<div style="position:absolute;left:129px;top:1012.96px;width:31px;height:17.4px;background:#0c68f0;border-radius:9px;"></div>
<div style="position:absolute;left:145.6px;top:1015.0600000000001px;width:12.6px;height:12.6px;background:#fff;border-radius:50%;"></div>
<div class="t" style="top:1015.00px;font-size:13px;color:#1f1f1f;letter-spacing:-0.3px;left:218.30px;">224317</div>
<div class="t" style="top:1015.00px;font-size:13px;color:#1c6aaa;letter-spacing:-0.382px;left:285.50px;">Khaki zinc vulture</div>
<div style="position:absolute;left:484.4px;top:1013.6600000000001px;width:57px;height:16.5px;background:#dcf3e2;border-radius:9px;"></div>
<div style="position:absolute;left:491px;top:1018.1600000000001px;width:7px;height:7px;background:#18a449;border-radius:50%;"></div>
<div class="t" style="top:1016.00px;font-size:11px;color:#1a1a1a;letter-spacing:-0.3px;left:505.40px;">Active</div>
<div class="t" style="top:1015.00px;font-size:13px;color:#1f1f1f;letter-spacing:-0.3px;left:665.40px;">12</div>
<div class="t" style="top:1015.00px;font-size:13px;color:#1f1f1f;letter-spacing:-0.3px;left:725.30px;">450.53</div>
<div class="t" style="top:1015.00px;font-size:13px;color:#888;letter-spacing:-0.3px;left:715.92px;">$</div>
<div class="t" style="top:1015.00px;font-size:13px;color:#1f1f1f;letter-spacing:-0.3px;left:833.40px;">12</div>
<div class="t" style="top:1015.00px;font-size:13px;color:#1f1f1f;letter-spacing:-0.3px;left:910.50px;">00:00:52</div>
<div class="t" style="top:1015.00px;font-size:13px;color:#1f1f1f;letter-spacing:-0.3px;left:1011.70px;">56.24</div>
<div class="t" style="top:1015.00px;font-size:13px;color:#888;letter-spacing:-0.3px;left:1002.25px;">$</div>
<div class="t" style="top:1018.00px;font-size:10px;color:#8a8a8a;letter-spacing:0px;left:1143.80px;">%</div>
<div class="t" style="top:1015.00px;font-size:13px;color:#1f1f1f;letter-spacing:-0.3px;left:1115.10px;">5.12</div>
<svg style="position:absolute;left:1178px;top:1015.1600000000001px;" width="13" height="13" viewBox="0 0 13 13"><path d="M1.5 11.5l0.6-2.6 7.3-7.3 2 2-7.3 7.3z" fill="none" stroke="#7a7a7a" stroke-width="1.1" stroke-linejoin="round"/><line x1="8.2" y1="2.8" x2="10.2" y2="4.8" stroke="#7a7a7a" stroke-width="1.1"/></svg>
<svg style="position:absolute;left:1211px;top:1014.6600000000001px;" width="4" height="14" viewBox="0 0 4 14"><circle cx="2" cy="2.3" r="1.25" fill="#707070"/><circle cx="2" cy="7" r="1.25" fill="#707070"/><circle cx="2" cy="11.7" r="1.25" fill="#707070"/></svg>
<div style="position:absolute;left:44px;top:1043.04px;width:1200px;height:41.88px;background:#fff;border-bottom:1px solid #ececec;box-sizing:border-box;"></div>
<div style="position:absolute;left:74px;top:1056.04px;width:15px;height:15px;border:1.5px solid #c2c2c2;border-radius:2px;box-sizing:border-box;background:#fff;"></div>
<div style="position:absolute;left:129px;top:1054.84px;width:31px;height:17.4px;background:#0c68f0;border-radius:9px;"></div>
<div style="position:absolute;left:145.6px;top:1056.94px;width:12.6px;height:12.6px;background:#fff;border-radius:50%;"></div>
<div class="t" style="top:1057.00px;font-size:13px;color:#1f1f1f;letter-spacing:-0.3px;left:225.30px;">46692</div>
<div class="t" style="top:1057.00px;font-size:13px;color:#1c6aaa;letter-spacing:-0.343px;left:285.50px;">Puccoon lead cormorant</div>
<div style="position:absolute;left:484.4px;top:1055.54px;width:57px;height:16.5px;background:#cdf5d7;border-radius:9px;"></div>
<div class="t" style="top:1058.00px;font-size:11px;color:#1a1a1a;letter-spacing:-0.3px;left:505.40px;">Active</div>
<svg style="position:absolute;left:569px;top:1057.54px;" width="12" height="12" viewBox="0 0 12 12"><circle cx="6" cy="6" r="5.8" fill="#7d7d7d"/><path d="M5.8 2.6v3.6l2.4 2" fill="none" stroke="#fff" stroke-width="1.3"/></svg>
<div class="t" style="top:1057.00px;font-size:13px;color:#1f1f1f;letter-spacing:-0.3px;left:672.40px;">0</div>
<div class="t" style="top:1057.00px;font-size:13px;color:#1f1f1f;letter-spacing:-0.3px;left:732.30px;">50.98</div>
<div class="t" style="top:1057.00px;font-size:13px;color:#888;letter-spacing:-0.3px;left:722.85px;">$</div>
<div class="t" style="top:1057.00px;font-size:13px;color:#1f1f1f;letter-spacing:-0.3px;left:840.40px;">0</div>
<div class="t" style="top:1057.00px;font-size:13px;color:#1f1f1f;letter-spacing:-0.3px;left:910.50px;">00:00:52</div>
<div class="t" style="top:1057.00px;font-size:13px;color:#1f1f1f;letter-spacing:-0.3px;left:1011.70px;">13.01</div>
<div class="t" style="top:1057.00px;font-size:13px;color:#888;letter-spacing:-0.3px;left:1002.25px;">$</div>
<div class="t" style="top:1060.00px;font-size:10px;color:#8a8a8a;letter-spacing:0px;left:1143.80px;">%</div>
<div class="t" style="top:1057.00px;font-size:13px;color:#1f1f1f;letter-spacing:-0.3px;left:1109.10px;">11.21</div>
<svg style="position:absolute;left:1178px;top:1057.04px;" width="13" height="13" viewBox="0 0 13 13"><path d="M1.5 11.5l0.6-2.6 7.3-7.3 2 2-7.3 7.3z" fill="none" stroke="#7a7a7a" stroke-width="1.1" stroke-linejoin="round"/><line x1="8.2" y1="2.8" x2="10.2" y2="4.8" stroke="#7a7a7a" stroke-width="1.1"/></svg>
<svg style="position:absolute;left:1211px;top:1056.54px;" width="4" height="14" viewBox="0 0 4 14"><circle cx="2" cy="2.3" r="1.25" fill="#707070"/><circle cx="2" cy="7" r="1.25" fill="#707070"/><circle cx="2" cy="11.7" r="1.25" fill="#707070"/></svg>
<div style="position:absolute;left:44px;top:1084.92px;width:1200px;height:41.88px;background:#fafafa;border-bottom:1px solid #ececec;box-sizing:border-box;"></div>
<div style="position:absolute;left:74px;top:1097.92px;width:15px;height:15px;border:1.5px solid #c2c2c2;border-radius:2px;box-sizing:border-box;background:#fff;"></div>
<div style="position:absolute;left:129px;top:1096.72px;width:31px;height:17.4px;background:#e1e1e3;border-radius:9px;"></div>
<div style="position:absolute;left:131.2px;top:1098.8200000000002px;width:12.6px;height:12.6px;background:#fff;border-radius:50%;"></div>
<div class="t" style="top:1099.00px;font-size:13px;color:#1f1f1f;letter-spacing:-0.3px;left:218.30px;">169383</div>
<div class="t" style="top:1099.00px;font-size:13px;color:#1c6aaa;letter-spacing:-0.429px;left:285.50px;">Cyaneous copper albatross</div>
<div style="position:absolute;left:484.4px;top:1097.42px;width:62px;height:16.5px;background:#e6e6e8;border-radius:9px;"></div>
<div style="position:absolute;left:491px;top:1101.92px;width:7px;height:7px;background:#c6c6cc;border-radius:50%;"></div>
<div class="t" style="top:1100.00px;font-size:10.75px;color:#222;letter-spacing:-0.46px;left:505.40px;">Paused</div>
<div class="t" style="top:1099.00px;font-size:13px;color:#1f1f1f;letter-spacing:-0.3px;left:648.30px;">1,056</div>
<div style="position:absolute;left:752px;top:1105.42px;width:12px;height:1px;background:#9a9a9a;"></div>
<div class="t" style="top:1099.00px;font-size:13px;color:#1f1f1f;letter-spacing:-0.3px;left:816.30px;">1,056</div>
<div class="t" style="top:1099.00px;font-size:13px;color:#1f1f1f;letter-spacing:-0.3px;left:910.50px;">00:00:52</div>
<div class="t" style="top:1099.00px;font-size:13px;color:#1f1f1f;letter-spacing:-0.3px;left:1011.70px;">20.01</div>
<div class="t" style="top:1099.00px;font-size:13px;color:#888;letter-spacing:-0.3px;left:1002.25px;">$</div>
<div class="t" style="top:1102.00px;font-size:10px;color:#8a8a8a;letter-spacing:0px;left:1143.80px;">%</div>
<div class="t" style="top:1099.00px;font-size:13px;color:#1f1f1f;letter-spacing:-0.3px;left:1115.10px;">2.13</div>
<svg style="position:absolute;left:1178px;top:1098.92px;" width="13" height="13" viewBox="0 0 13 13"><path d="M1.5 11.5l0.6-2.6 7.3-7.3 2 2-7.3 7.3z" fill="none" stroke="#7a7a7a" stroke-width="1.1" stroke-linejoin="round"/><line x1="8.2" y1="2.8" x2="10.2" y2="4.8" stroke="#7a7a7a" stroke-width="1.1"/></svg>
<svg style="position:absolute;left:1211px;top:1098.42px;" width="4" height="14" viewBox="0 0 4 14"><circle cx="2" cy="2.3" r="1.25" fill="#707070"/><circle cx="2" cy="7" r="1.25" fill="#707070"/><circle cx="2" cy="11.7" r="1.25" fill="#707070"/></svg>
<div style="position:absolute;left:591px;top:658px;width:1px;height:468px;background:#e6e6e6;"></div>
<div style="position:absolute;left:1164px;top:658px;width:1px;height:468px;background:#e6e6e6;"></div>
<div style="position:absolute;left:44px;top:1127px;width:1200px;height:48px;background:#fafafa;border-bottom:1px solid #e3e3e3;box-sizing:border-box;"></div>
<div class="t" style="top:1147.00px;font-size:10.5px;color:#222;letter-spacing:-0.122px;left:862.70px;">Campaigns per page:</div>
<div style="position:absolute;left:969px;top:1135px;width:44px;height:31px;background:#fcfcfc;border:1px solid #e6e6e6;border-radius:4px;box-sizing:border-box;"></div>
<div class="t" style="top:1146.00px;font-size:12px;color:#222;letter-spacing:-0.2px;left:975.00px;">10</div>
<svg style="position:absolute;left:1000px;top:1149px;" width="8" height="5" viewBox="0 0 8 5"><path d="M0.5 0.5h7L4 4z" fill="#888"/></svg>
<div class="t" style="top:1147.00px;font-size:11px;color:#222;letter-spacing:-0.443px;left:1037.00px;">1 — 10 of 14594</div>
<svg style="position:absolute;left:1128px;top:1146px;" width="9" height="10" viewBox="0 0 9 10"><path d="M1 1v8M7.5 1.2L4 5l3.5 3.8" fill="none" stroke="#d6d6d6" stroke-width="1.3"/></svg>
<svg style="position:absolute;left:1161px;top:1146px;" width="6" height="10" viewBox="0 0 6 10"><path d="M5 1.2L1.5 5 5 8.8" fill="none" stroke="#d6d6d6" stroke-width="1.3"/></svg>
<svg style="position:absolute;left:1191px;top:1146px;" width="7" height="10" viewBox="0 0 7 10"><path d="M1.5 1.2L5.5 5 1.5 8.8" fill="none" stroke="#222" stroke-width="1.6"/></svg>
<svg style="position:absolute;left:1221px;top:1146px;" width="11" height="10" viewBox="0 0 11 10"><path d="M1.2 1.2L5 5 1.2 8.8M9 1v8" fill="none" stroke="#222" stroke-width="1.6"/></svg>
<div style="position:absolute;left:774px;top:646px;width:384px;height:75.5px;border:2.4px solid #cf712c;box-sizing:border-box;"></div>
<svg style="position:absolute;left:0px;top:0px;" width="1244" height="700" viewBox="0 0 1244 700"><path d="M930.5,556.3 L1092.2,602.5 L1091.5,598.5 Q1091,593.5 1096,595.5 L1114.5,617.5 Q1116,619 1113.5,619.5 L1086,624 Q1082,624 1083.5,620.5 L1088.8,616.2 L930.2,558.4 Q928.6,557.4 930.5,556.3Z" fill="#f56b10" stroke="#f26a12" stroke-width="1.2" stroke-linejoin="round"/></svg>
</body></html>
